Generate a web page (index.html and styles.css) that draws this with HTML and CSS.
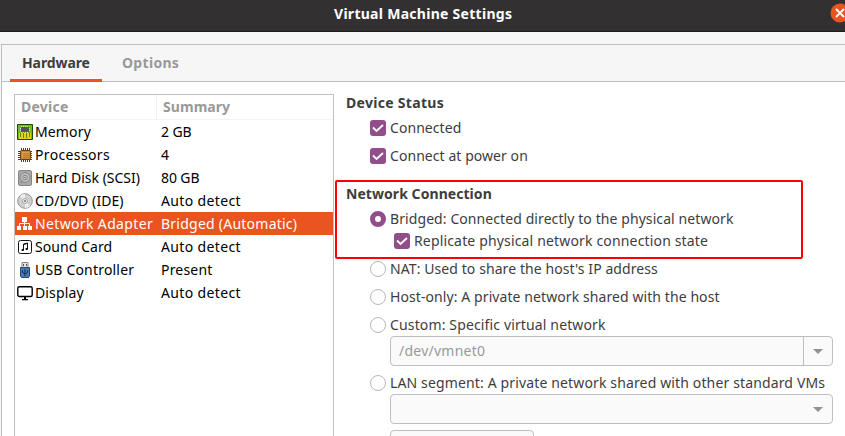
FILE: index.html
```html
<!DOCTYPE html>
<html lang="en">
<head>
<meta charset="utf-8">
<title>Virtual Machine Settings</title>
<link rel="stylesheet" href="styles.css">
</head>
<body>
<header class="titlebar">
  <h1><span class="title">Virtual Machine Settings</span></h1>
  <svg class="close" width="20" height="20" viewBox="0 0 20 20"><circle cx="10" cy="10" r="9.5" fill="#e95420"/><path d="M6 6l8 8M14 6l-8 8" stroke="#fff" stroke-width="1.8"/></svg>
</header>
<main class="notebook">
  <nav class="tabs">
    <div class="tab active"><span class="t-hardware">Hardware</span></div>
    <div class="tab"><span class="t-options">Options</span></div>
  </nav>
  <div class="page">
    <section class="devices">
      <div class="row head"><span class="name"><span class="h-device">Device</span></span><span class="sum"><span class="h-summary">Summary</span></span></div>
      <div class="row">
        <svg width="16" height="16" viewBox="0 0 16 16"><path d="M.5.5h15v15H.5z" fill="#72bd19" stroke="#164d0a"/><path d="M2 9h12v6H2z" fill="#e4d51b"/><path d="M3.5 9v4M6.5 9v5M9.5 9v5M12.5 9v4" stroke="#74761a"/><path d="M4 3h8v5H4z" fill="#555"/><path d="M4 2.5h8M4 8.5h8" stroke="#ddd" stroke-dasharray="1 1"/><path d="M3 4h1v1H3zM12 4h1v1h-1zM3 6h1v1H3zM12 6h1v1h-1z" fill="#ddd"/></svg>
        <span class="name"><span class="n-memory">Memory</span></span><span class="sum"><span class="s-gb2">2 GB</span></span></div>
      <div class="row">
        <svg width="16" height="16" viewBox="0 0 16 16"><path d="M4.5 1v14M6.5 1v14M8.500 1v14M10.500 1v14M12.500 1v14M1 4.500h14M1 6.500h14M1 8.500h14M1 10.500h14M1 12.500h14" stroke="#4a4032"/><rect x="3.500" y="3.500" width="10" height="9" rx="1" fill="#c88532" stroke="#75420f"/><path d="M5 5.500h7M5.500 5v6" stroke="#d99f55" fill="none"/></svg>
        <span class="name"><span class="n-proc">Processors</span></span><span class="sum">4</span></div>
      <div class="row">
        <svg width="16" height="16" viewBox="0 0 16 16"><rect x="1.500" y=".5" width="13" height="15" rx="1.500" fill="#aaa" stroke="#868686"/><circle cx="8" cy="7.500" r="5" fill="#bdbdbd" stroke="#858585"/><circle cx="8" cy="7.500" r="2.300" fill="#ccc" stroke="#858585"/><circle cx="8" cy="7.500" r=".8" fill="#666"/><path d="M3 13l3-2" stroke="#858585"/></svg>
        <span class="name"><span class="n-disk">Hard Disk (SCSI)</span></span><span class="sum"><span class="s-gb80">80 GB</span></span></div>
      <div class="row">
        <svg width="16" height="16" viewBox="0 0 16 16"><circle cx="8" cy="8" r="7.300" fill="#d0d0d0" stroke="#929292"/><path d="M8 8L3 3a7 7 0 0 1 5-2zM8 8l5 5a7 7 0 0 1-5 2z" fill="#ededed"/><circle cx="8" cy="8" r="2.500" fill="#eee" stroke="#aaa"/><circle cx="8" cy="8" r="1" fill="#777"/></svg>
        <span class="name"><span class="n-cd">CD/DVD (IDE)</span></span><span class="sum"><span class="s-auto">Auto detect</span></span></div>
      <div class="row selected">
        <svg width="16" height="16" viewBox="0 0 16 16"><path d="M5 1h5v5H5zM0 10h4v4H0zM6 10h4v4H6zM11 10h4v4h-4z" fill="#fff"/><path d="M7.500 6v4M2.500 10V7.500h10V10" stroke="#fff" fill="none"/></svg>
        <span class="name"><span class="n-net">Network Adapter</span></span><span class="sum"><span class="s-bridged">Bridged (Automatic)</span></span></div>
      <div class="row">
        <svg width="16" height="16" viewBox="0 0 16 16"><rect x="1.500" y="1.500" width="13" height="13" rx="2" fill="#fff" stroke="#111"/><path d="M6.500 11V5l4-1v6" stroke="#111" fill="none"/><path d="M6.500 5.500l4-1" stroke="#111"/><ellipse cx="5.700" cy="11" rx="1.300" ry="1"/><ellipse cx="9.700" cy="10" rx="1.300" ry="1"/></svg>
        <span class="name"><span class="n-sound">Sound Card</span></span><span class="sum"><span class="s-auto">Auto detect</span></span></div>
      <div class="row">
        <svg width="16" height="16" viewBox="0 0 16 16"><path d="M5 .5h6v5H5z" fill="#e4e4e0" stroke="#888"/><path d="M6 2h1v2H6zM9 2h1v2H9z" fill="#555"/><path d="M3.500 5.500h9V14l-1 1.500h-7l-1-1.500z" fill="#4779b5" stroke="#24466f"/><path d="M8 7v7M5.500 8.500v2L8 12l2.500-1.500v-2" stroke="#102c50" fill="none"/></svg>
        <span class="name"><span class="n-usb">USB Controller</span></span><span class="sum"><span class="s-present">Present</span></span></div>
      <div class="row">
        <svg width="16" height="16" viewBox="0 0 16 16"><rect x=".8" y="1.800" width="14.400" height="9.700" rx="1.500" fill="#fff" stroke="#000" stroke-width="1.400"/><path d="M7 12h2v2h2v1.200H5V14h2z"/></svg>
        <span class="name"><span class="n-display">Display</span></span><span class="sum"><span class="s-auto">Auto detect</span></span></div>
    </section>
    <section class="options">
      <h2><span class="o-status">Device Status</span></h2>
      <div class="option"><i class="check"><svg width="16" height="16"><path d="M3 7.500l3.500 3.500L13 5" fill="none" stroke="#fff" stroke-width="1.800"/></svg></i><span class="o-connected">Connected</span></div>
      <div class="option"><i class="check"><svg width="16" height="16"><path d="M3 7.500l3.500 3.500L13 5" fill="none" stroke="#fff" stroke-width="1.800"/></svg></i><span class="o-power">Connect at power on</span></div>
      <h2 class="second"><span class="o-network">Network Connection</span></h2>
      <div class="option bridged"><i class="radio on"></i><span class="o-bridged">Bridged: Connected directly to the physical network</span></div>
      <div class="option nested"><i class="check"><svg width="16" height="16"><path d="M3 7.500l3.500 3.500L13 5" fill="none" stroke="#fff" stroke-width="1.800"/></svg></i><span class="o-replicate">Replicate physical network connection state</span></div>
      <div class="option"><i class="radio"></i><span class="o-nat">NAT: Used to share the host's IP address</span></div>
      <div class="option"><i class="radio"></i><span class="o-host">Host-only: A private network shared with the host</span></div>
      <div class="option custom"><i class="radio"></i><span class="o-custom">Custom: Specific virtual network</span></div>
      <div class="combo entry"><span class="value"><span class="o-dev">/dev/vmnet0</span></span><span class="arrow"><svg width="10" height="5"><path d="M0 0h10L5 5z"/></svg></span></div>
      <div class="option lan"><i class="radio"></i><span class="o-lan">LAN segment: A private network shared with other standard VMs</span></div>
      <div class="combo"><span class="value"></span><span class="arrow"><svg width="10" height="5"><path d="M0 0h10L5 5z"/></svg></span></div>
      <div class="button"></div>
    </section>
  </div>
</main>
<div class="highlight"></div>
</body>
</html>
```
FILE: styles.css
```css
* { box-sizing: border-box; }
body { margin: 0; width: 845px; height: 436px; overflow: hidden; background: #f6f6f6; color: #3d3d3d; font: 14px/20px "Noto Sans", sans-serif; position: relative; }
svg { display: block; flex: none; }
h1, h2 { margin: 0; font-size: 14px; line-height: 20px; font-weight: 700; }
.titlebar { height: 32px; background: #323031; border-bottom: 1px solid #1c1a1b; color: #fff; display: flex; justify-content: center; padding-top: 4px; position: relative; }
.titlebar h1 { width: 178px; margin-left: 1px; white-space: nowrap; }
.close { position: absolute; left: 830px; top: 3px; }
.notebook { margin: 12px 0 0 1px; border: solid #c0bfbf; border-width: 1px 0 0 1px; height: 392px; overflow: hidden; }
.tabs { display: flex; height: 37px; padding-left: 8px; border-bottom: 1px solid #c0bfbf; font-weight: 700; color: #999; }
.tab { height: 37px; padding: 8px 12px 0; width: 92px; border-bottom: 3px solid transparent; white-space: nowrap; }
.tab + .tab { margin-left: 8px; }
.tab.active { color: #3d3d3d; border-color: #e95420; }
.page { display: flex; height: 354px; padding: 12px 0 0 12px; background: #fff; }
.devices { width: 320px; flex: none; border: 1px solid #c0bfbf; border-bottom: 0; color: #000; }
.row { display: flex; align-items: center; height: 23px; padding-left: 2px; white-space: nowrap; }
.row .name { width: 128px; padding-left: 2px; }
.head { height: 25px; padding-left: 0; border-bottom: 1px solid #f3f3f3; font-weight: 700; color: #999; }
.row.head .name { width: 142px; height: 24px; line-height: 23px; padding-left: 6px; border-right: 1px solid #f0f0f0; }
.head .sum { padding-left: 6px; }
.selected { background: #e95420; color: #fff; }
.options { width: 487px; flex: none; margin: -1px 0 0 12px; }
.option { display: flex; align-items: center; gap: 4px; height: 28px; padding-left: 24px; white-space: nowrap; }
h2 { height: 20px; white-space: nowrap; }
h2:first-child { margin-bottom: 1px; }
.second { margin-top: 14px; }
.option.bridged { height: 22px; margin-top: 4px; }
.option.nested { height: 22px; padding-left: 48px; margin-bottom: 3px; }
.option.custom { height: 25px; align-items: flex-start; }
.option.custom > * { margin-top: 6px; }
.option.custom > span { margin-top: 4px; }
.check { width: 16px; height: 16px; border-radius: 3px; background: #924d8b; }
.radio { width: 16px; height: 16px; border-radius: 50%; border: 1px solid #b9b8b8; background: #fff; }
.radio.on { border: 5px solid #924d8b; }
.combo { display: flex; width: 443px; height: 30px; margin-left: 44px; border: 1px solid #c0bfbf; border-radius: 4px; background: #fafafa; color: #999; }
.combo .value { flex: 1; padding: 4px 8px; white-space: nowrap; }
.arrow { width: 29px; display: flex; align-items: center; justify-content: center; fill: #929292; }
.entry .arrow { border-left: 1px solid #c0bfbf; }
.option.lan { height: 22px; margin: 6px 0 0; }
.button { width: 144px; height: 30px; margin: 6px 0 0 44px; border: 1px solid #c0bfbf; border-radius: 4px; background: #fafafa; }
.highlight { position: absolute; left: 335px; top: 180px; width: 468px; height: 79px; border: 2px solid #f00; border-radius: 2px; }

/* Label tracking */
.title { letter-spacing: .28px; }
.t-hardware { letter-spacing: -.1px; }
.t-options, .o-status { letter-spacing: .3px; }
.h-device, .s-bridged { letter-spacing: .24px; }
.h-summary, .o-network { letter-spacing: .06px; }
.n-memory, .n-display, .o-custom, .o-lan { letter-spacing: .14px; }
.n-proc, .n-net, .s-auto { letter-spacing: .36px; }
.n-cd, .n-sound { letter-spacing: .07px; }
.n-usb, .s-present { letter-spacing: .19px; }
.s-gb2, .s-gb80 { letter-spacing: -.1px; }
.o-connected, .o-power { letter-spacing: .06px; }
.o-bridged, .o-nat, .o-host { letter-spacing: .085px; }
.o-replicate { letter-spacing: .16px; }
.o-dev { letter-spacing: .25px; }
```
